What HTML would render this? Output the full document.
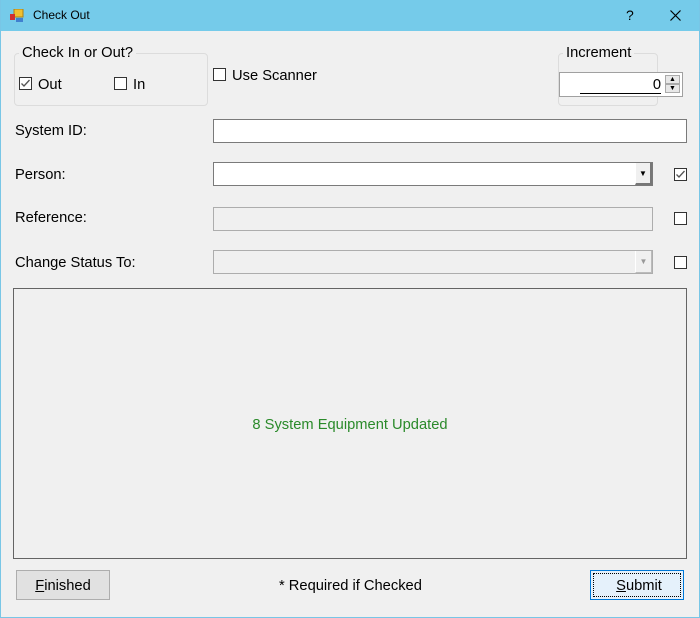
<!DOCTYPE html>
<html><head><style>
*{box-sizing:border-box;margin:0;padding:0}
body{width:700px;height:618px;background:#f0f0f0;font-family:"Liberation Sans",Arial,sans-serif;font-size:14.7px;color:#000;position:relative;overflow:hidden}
.a{position:absolute}
.win{left:0;top:0;width:700px;height:618px;border:1px solid #78c6e6;border-top:none}
.title{left:0;top:0;width:700px;height:31px;background:#75cbea}
.cb{position:absolute;width:13px;height:13px;border:1px solid #333;background:#fff}
.tb{position:absolute;background:#fff;border:1px solid #7a7a7a}
.dis{background:#f0f0f0;border:1px solid #adadad}
.grp{position:absolute;border:1px solid #dcdcdc;border-radius:4px}
.lbl{position:absolute;background:#f0f0f0;padding:0 3px}
.btn{position:absolute;border:1px solid #adadad;background:#e1e1e1;text-align:center;line-height:30px}
</style></head><body>
<div class="a title"></div>
<div class="a win"></div>
<svg class="a" style="left:10px;top:9px" width="14" height="14"><rect x="4" y="0" width="9" height="8" fill="#f0c030" stroke="#b08010"/><rect x="0" y="5" width="5" height="6" fill="#d03030"/><rect x="6" y="9" width="7" height="4" fill="#4080d0"/></svg>
<div class="a" style="left:33px;top:8px;font-size:12px">Check Out</div>
<div class="a" style="left:626px;top:7px;font-size:14px">?</div>
<svg class="a" style="left:670px;top:10px" width="11" height="11"><path d="M0.5 0.5L10.5 10.5M10.5 0.5L0.5 10.5" stroke="#000" stroke-width="1.2"/></svg>

<div class="grp" style="left:14px;top:53px;width:194px;height:53px"></div>
<div class="lbl" style="left:19px;top:45px">Check In or Out?</div>
<div class="cb" style="left:19px;top:77px"></div>
<svg class="a" style="left:19px;top:77px" width="13" height="13"><path d="M2.5 6.5L5 9L10.5 3" stroke="#555" stroke-width="1.3" fill="none"/></svg>
<div class="a" style="left:38px;top:77px">Out</div>
<div class="cb" style="left:114px;top:77px"></div>
<div class="a" style="left:133px;top:77px">In</div>
<div class="cb" style="left:213px;top:68px"></div>
<div class="a" style="left:232px;top:68px">Use Scanner</div>

<div class="grp" style="left:558px;top:53px;width:100px;height:53px"></div>
<div class="lbl" style="left:563px;top:45px">Increment</div>
<div class="tb" style="left:559px;top:72px;width:124px;height:25px;border-color:#a0a0a0"></div>
<div class="a" style="left:580px;top:77px;width:81px;text-align:right;border-bottom:1px solid #000;line-height:16px">0</div>
<div class="a" style="left:665px;top:75px;width:15px;height:9px;background:#e8e8e8;border:1px solid #aaa;font-size:7px;text-align:center;line-height:7px">▲</div>
<div class="a" style="left:665px;top:84px;width:15px;height:9px;background:#e8e8e8;border:1px solid #aaa;font-size:7px;text-align:center;line-height:7px">▼</div>

<div class="a" style="left:15px;top:123px">System ID:</div>
<div class="tb" style="left:213px;top:119px;width:474px;height:24px"></div>

<div class="a" style="left:15px;top:167px">Person:</div>
<div class="tb" style="left:213px;top:162px;width:440px;height:24px"></div>
<div class="a" style="left:635px;top:163px;width:17px;height:22px;background:#f0f0f0;border-right:2px solid #777;border-bottom:2px solid #777;border-left:1px solid #fff;font-size:8px;text-align:center;line-height:22px">▼</div>
<div class="cb" style="left:674px;top:168px"></div>
<svg class="a" style="left:674px;top:168px" width="13" height="13"><path d="M2.5 6.5L5 9L10.5 3" stroke="#555" stroke-width="1.3" fill="none"/></svg>

<div class="a" style="left:15px;top:210px">Reference:</div>
<div class="tb dis" style="left:213px;top:207px;width:440px;height:24px"></div>
<div class="cb" style="left:674px;top:212px"></div>

<div class="a" style="left:15px;top:255px">Change Status To:</div>
<div class="tb dis" style="left:213px;top:250px;width:440px;height:24px"></div>
<div class="a" style="left:635px;top:251px;width:17px;height:22px;border-left:1px solid #fff;border-right:1px solid #bbb;border-bottom:1px solid #bbb;font-size:8px;color:#999;text-align:center;line-height:22px">▼</div>
<div class="cb" style="left:674px;top:256px"></div>

<div class="a" style="left:13px;top:288px;width:674px;height:271px;border:1px solid #646464"></div>
<div class="a" style="left:13px;top:417px;width:674px;text-align:center;color:#2a8a2a">8 System Equipment Updated</div>

<div class="btn" style="left:16px;top:570px;width:94px;height:30px"><u>F</u>inished</div>
<div class="a" style="left:279px;top:578px">* Required if Checked</div>
<div class="btn" style="left:590px;top:570px;width:94px;height:30px;border:1px solid #0078d7;background:#e5f1fb"><div style="position:absolute;left:2px;top:2px;right:2px;bottom:2px;border:1px dotted #000"></div><span style="position:relative;left:2px"><u>S</u>ubmit</span></div>
</body></html>
